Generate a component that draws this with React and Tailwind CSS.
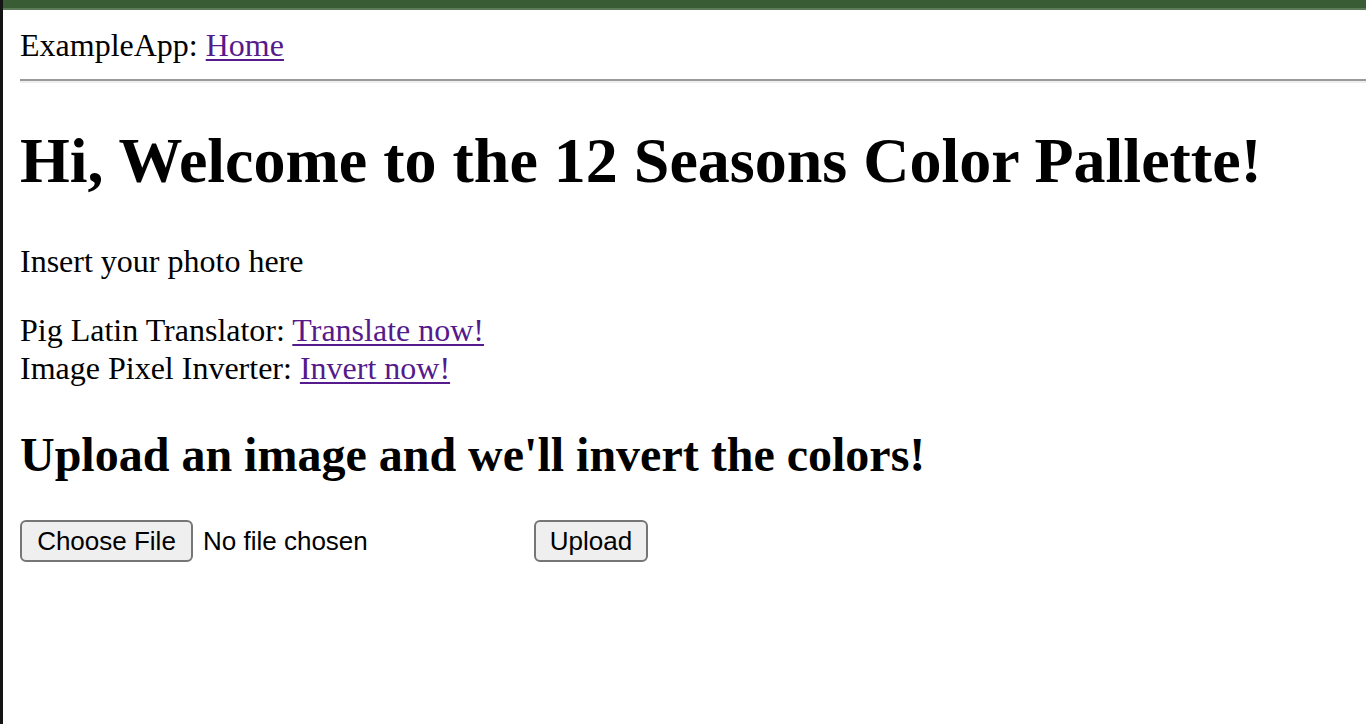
export default function App() {
  const serif = { fontFamily: '"Liberation Serif", "Times New Roman", serif' };
  const sans = { fontFamily: '"Liberation Sans", Arial, Helvetica, sans-serif' };
  return (
    <div className="flex min-h-screen w-full bg-white text-black" style={serif}>
      <div className="w-[3px] shrink-0 bg-[#141414]" />
      <div className="flex min-w-0 flex-1 flex-col">
        <div className="h-[8px] bg-[#3a5c34]" />
        <div className="h-[2px] bg-[#5d7b58]" />
        <div className="flex flex-col pl-[17px]">
          <div className="mt-[17px] text-[32px] leading-[37px]">
            ExampleApp:{" "}
            <a href="#" className="text-[#551a8b] underline decoration-2 underline-offset-[3px]">
              Home
            </a>
          </div>
          <div className="mt-[15px] h-[4px] border-t-2 border-b-2 border-t-[#9a9a9a] border-b-[#eeeeee]" />
          <h1 className="mt-[41px] text-[64px] font-bold leading-[74px]">
            Hi, Welcome to the 12 Seasons Color Pallette!
          </h1>
          <p className="mt-[45px] text-[32px] leading-[37px]">Insert your photo here</p>
          <p className="mt-[32px] text-[32px] leading-[37.5px]">
            Pig Latin Translator:{" "}
            <a href="#" className="text-[#551a8b] underline decoration-2 underline-offset-[3px]">
              Translate now!
            </a>
            <br />
            Image Pixel Inverter:{" "}
            <a href="#" className="text-[#551a8b] underline decoration-2 underline-offset-[3px]">
              Invert now!
            </a>
          </p>
          <h2 className="mt-[40px] text-[48px] font-bold leading-[55px]">
            Upload an image and we'll invert the colors!
          </h2>
          <div className="mt-[38px] flex items-center" style={sans}>
            <div className="flex w-[514px] items-center">
              <button className="flex h-[42px] w-[173px] items-center justify-center rounded-[6px] border-2 border-[#767676] bg-[#efefef] text-[26px] leading-none text-black">
                Choose File
              </button>
              <span className="ml-[10px] text-[26px] leading-none text-black">No file chosen</span>
            </div>
            <button className="flex h-[42px] w-[114px] items-center justify-center rounded-[6px] border-2 border-[#767676] bg-[#efefef] text-[26px] leading-none text-black">
              Upload
            </button>
          </div>
        </div>
      </div>
    </div>
  );
}
